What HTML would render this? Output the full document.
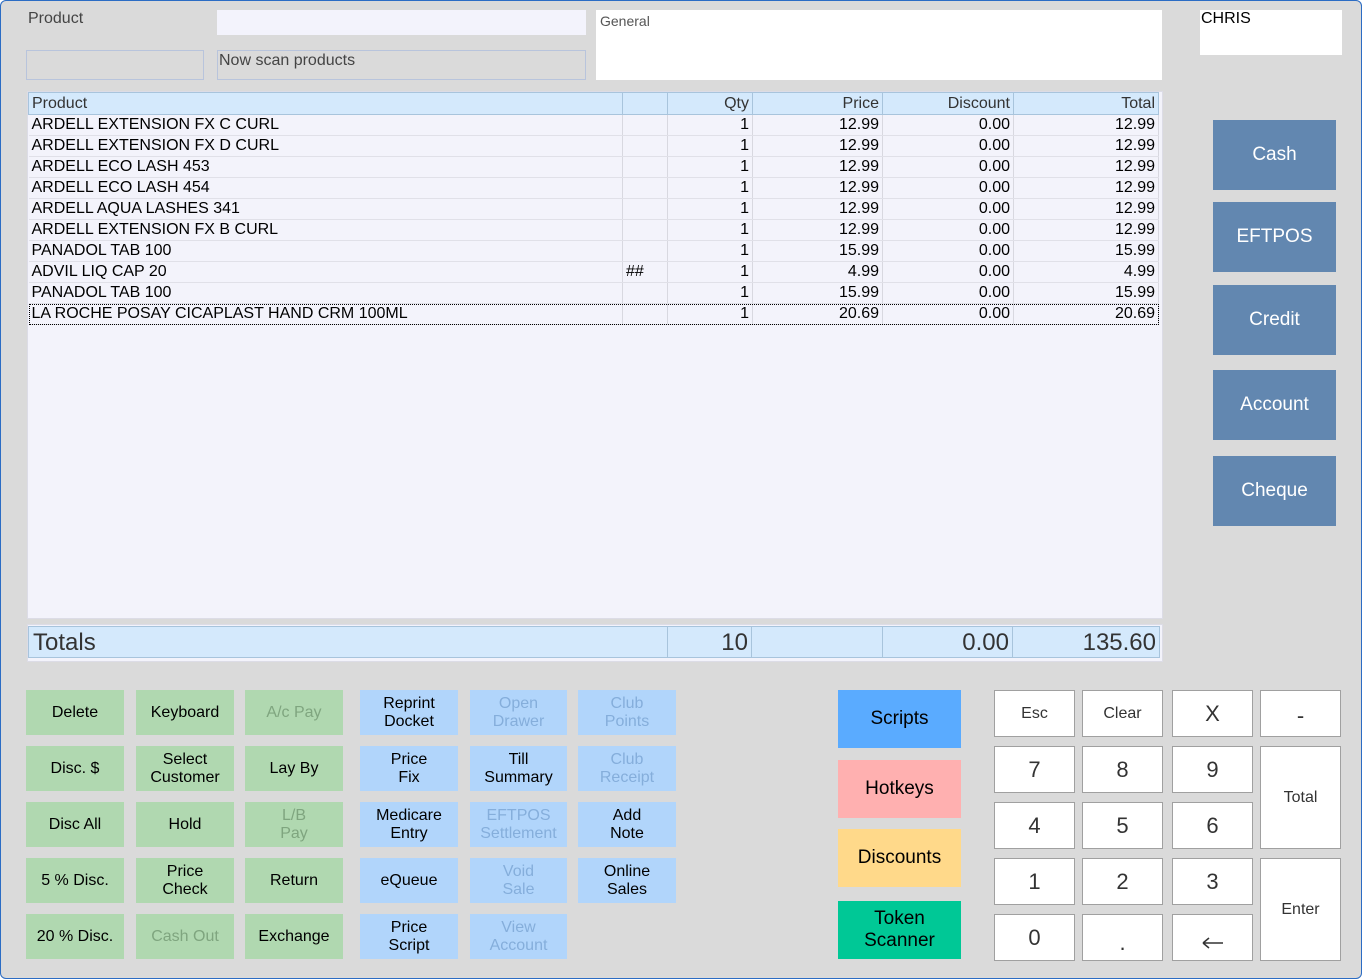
<!DOCTYPE html>
<html><head><meta charset="utf-8"><style>
*{box-sizing:border-box;margin:0;padding:0}
body{width:1362px;height:979px;overflow:hidden;background:#fff;font-family:"Liberation Sans",Arial,sans-serif;position:relative}
#win{position:absolute;left:0;top:0;width:1362px;height:979px;background:#dadada;box-shadow:inset 0 0 0 1px #2b6cc4;border-radius:6px}
.a{position:absolute}
.lbl{font-size:16px;color:#444}
table{border-collapse:collapse;font-size:16px;color:#000;table-layout:fixed}
td{height:21px;border-right:1px solid #d8d8e0;border-bottom:1px solid #e0e0e8;padding:0 3px;white-space:nowrap;overflow:hidden;line-height:20px}
td.r{text-align:right}
tr.h td{background:#d4e9fc;border:1px solid #a8c4dc;color:#333;height:22px}
.b{position:absolute;display:flex;align-items:center;justify-content:center;text-align:center;font-size:16px;line-height:18px;color:#000}
.g{background:#b0d8b0}.bl{background:#b1d5fb}
.dg{color:#7fa57f}.db{color:#85aedb}
.pay{background:#6287b0;color:#fff;font-size:19px;width:123px;height:70px;left:1213px}
.col{width:123px;left:838px;font-size:19px;line-height:22px}
.k{background:#fff;border:1px solid #a0a0a0;font-size:22px;color:#333}
</style></head><body><div id="win">
<div class="a lbl" style="left:28px;top:10px">Product</div>
<div class="a" style="left:217px;top:10px;width:369px;height:25px;background:#f3f3fc"></div>
<div class="a" style="left:26px;top:50px;width:178px;height:30px;border:1px solid #b8c4dc"></div>
<div class="a lbl" style="left:217px;top:50px;width:369px;height:30px;border:1px solid #b8c4dc;padding-left:1px;line-height:20px">Now scan products</div>
<div class="a" style="left:596px;top:10px;width:566px;height:70px;background:#fff;font-size:14px;color:#555;padding:3px 4px">General</div>
<div class="a" style="left:1200px;top:10px;width:142px;height:45px;background:#fff;font-size:16px;color:#000;padding:0 1px">CHRIS</div>

<div class="a" style="left:27px;top:91px;width:1136px;height:528px;background:#f3f3fb;border:1px solid #dcdce6">
<table style="width:1130px">
<colgroup><col style="width:594px"><col style="width:45px"><col style="width:85px"><col style="width:130px"><col style="width:131px"><col style="width:145px"></colgroup>
<tr class="h"><td>Product</td><td></td><td class="r">Qty</td><td class="r">Price</td><td class="r">Discount</td><td class="r">Total</td></tr>
<tr><td>ARDELL EXTENSION FX C CURL</td><td></td><td class="r">1</td><td class="r">12.99</td><td class="r">0.00</td><td class="r">12.99</td></tr>
<tr><td>ARDELL EXTENSION FX D CURL</td><td></td><td class="r">1</td><td class="r">12.99</td><td class="r">0.00</td><td class="r">12.99</td></tr>
<tr><td>ARDELL ECO LASH 453</td><td></td><td class="r">1</td><td class="r">12.99</td><td class="r">0.00</td><td class="r">12.99</td></tr>
<tr><td>ARDELL ECO LASH 454</td><td></td><td class="r">1</td><td class="r">12.99</td><td class="r">0.00</td><td class="r">12.99</td></tr>
<tr><td>ARDELL AQUA LASHES 341</td><td></td><td class="r">1</td><td class="r">12.99</td><td class="r">0.00</td><td class="r">12.99</td></tr>
<tr><td>ARDELL EXTENSION FX B CURL</td><td></td><td class="r">1</td><td class="r">12.99</td><td class="r">0.00</td><td class="r">12.99</td></tr>
<tr><td>PANADOL TAB 100</td><td></td><td class="r">1</td><td class="r">15.99</td><td class="r">0.00</td><td class="r">15.99</td></tr>
<tr><td>ADVIL LIQ CAP 20</td><td>##</td><td class="r">1</td><td class="r">4.99</td><td class="r">0.00</td><td class="r">4.99</td></tr>
<tr><td>PANADOL TAB 100</td><td></td><td class="r">1</td><td class="r">15.99</td><td class="r">0.00</td><td class="r">15.99</td></tr>
<tr style="outline:1px dotted #000;outline-offset:-1px"><td>LA ROCHE POSAY CICAPLAST HAND CRM 100ML</td><td></td><td class="r">1</td><td class="r">20.69</td><td class="r">0.00</td><td class="r">20.69</td></tr>
</table></div>

<div class="a" style="left:27px;top:624px;width:1136px;height:38px;background:#f3f3fb;border:1px solid #dcdce6">
<div class="a" style="left:0;top:1px;width:1132px;height:32px;background:#d4e9fc;border:1px solid #a8c4dc;font-size:24px;color:#333">
<div class="a" style="left:4px;top:2px">Totals</div>
<div class="a" style="left:638px;top:0;width:85px;height:30px;border-left:1px solid #a8c4dc;border-right:1px solid #a8c4dc;text-align:right;padding:2px 3px">10</div>
<div class="a" style="left:853px;top:0;width:131px;height:30px;border-left:1px solid #a8c4dc;border-right:1px solid #a8c4dc;text-align:right;padding:2px 3px">0.00</div>
<div class="a" style="left:984px;top:0;width:146px;height:30px;text-align:right;padding:2px 3px">135.60</div>
</div></div>

<div class="b pay" style="top:120px">Cash</div>
<div class="b pay" style="top:202px">EFTPOS</div>
<div class="b pay" style="top:285px">Credit</div>
<div class="b pay" style="top:370px">Account</div>
<div class="b pay" style="top:456px">Cheque</div>

<div class="b g" style="left:26px;top:690px;width:98px;height:45px">Delete</div>
<div class="b g" style="left:136px;top:690px;width:98px;height:45px">Keyboard</div>
<div class="b g dg" style="left:245px;top:690px;width:98px;height:45px">A/c Pay</div>
<div class="b bl" style="left:360px;top:690px;width:98px;height:45px">Reprint<br>Docket</div>
<div class="b bl db" style="left:470px;top:690px;width:97px;height:45px">Open<br>Drawer</div>
<div class="b bl db" style="left:578px;top:690px;width:98px;height:45px">Club<br>Points</div>

<div class="b g" style="left:26px;top:746px;width:98px;height:45px">Disc. $</div>
<div class="b g" style="left:136px;top:746px;width:98px;height:45px">Select<br>Customer</div>
<div class="b g" style="left:245px;top:746px;width:98px;height:45px">Lay By</div>
<div class="b bl" style="left:360px;top:746px;width:98px;height:45px">Price<br>Fix</div>
<div class="b bl" style="left:470px;top:746px;width:97px;height:45px">Till<br>Summary</div>
<div class="b bl db" style="left:578px;top:746px;width:98px;height:45px">Club<br>Receipt</div>

<div class="b g" style="left:26px;top:802px;width:98px;height:45px">Disc All</div>
<div class="b g" style="left:136px;top:802px;width:98px;height:45px">Hold</div>
<div class="b g dg" style="left:245px;top:802px;width:98px;height:45px">L/B<br>Pay</div>
<div class="b bl" style="left:360px;top:802px;width:98px;height:45px">Medicare<br>Entry</div>
<div class="b bl db" style="left:470px;top:802px;width:97px;height:45px">EFTPOS<br>Settlement</div>
<div class="b bl" style="left:578px;top:802px;width:98px;height:45px">Add<br>Note</div>

<div class="b g" style="left:26px;top:858px;width:98px;height:45px">5 % Disc.</div>
<div class="b g" style="left:136px;top:858px;width:98px;height:45px">Price<br>Check</div>
<div class="b g" style="left:245px;top:858px;width:98px;height:45px">Return</div>
<div class="b bl" style="left:360px;top:858px;width:98px;height:45px">eQueue</div>
<div class="b bl db" style="left:470px;top:858px;width:97px;height:45px">Void<br>Sale</div>
<div class="b bl" style="left:578px;top:858px;width:98px;height:45px">Online<br>Sales</div>

<div class="b g" style="left:26px;top:914px;width:98px;height:45px">20 % Disc.</div>
<div class="b g dg" style="left:136px;top:914px;width:98px;height:45px">Cash Out</div>
<div class="b g" style="left:245px;top:914px;width:98px;height:45px">Exchange</div>
<div class="b bl" style="left:360px;top:914px;width:98px;height:45px">Price<br>Script</div>
<div class="b bl db" style="left:470px;top:914px;width:97px;height:45px">View<br>Account</div>

<div class="b col" style="top:690px;height:58px;background:#5aabff">Scripts</div>
<div class="b col" style="top:760px;height:58px;background:#ffb0b0">Hotkeys</div>
<div class="b col" style="top:829px;height:58px;background:#ffd98a">Discounts</div>
<div class="b col" style="top:901px;height:58px;background:#00c896">Token<br>Scanner</div>

<div class="b k" style="left:994px;top:690px;width:81px;height:47px;font-size:16px">Esc</div>
<div class="b k" style="left:1082px;top:690px;width:81px;height:47px;font-size:16px">Clear</div>
<div class="b k" style="left:1172px;top:690px;width:81px;height:47px">X</div>
<div class="b k" style="left:1260px;top:690px;width:81px;height:47px;padding-top:4px">-</div>
<div class="b k" style="left:994px;top:746px;width:81px;height:47px">7</div>
<div class="b k" style="left:1082px;top:746px;width:81px;height:47px">8</div>
<div class="b k" style="left:1172px;top:746px;width:81px;height:47px">9</div>
<div class="b k" style="left:1260px;top:746px;width:81px;height:103px;font-size:16px">Total</div>
<div class="b k" style="left:994px;top:802px;width:81px;height:47px">4</div>
<div class="b k" style="left:1082px;top:802px;width:81px;height:47px">5</div>
<div class="b k" style="left:1172px;top:802px;width:81px;height:47px">6</div>
<div class="b k" style="left:994px;top:858px;width:81px;height:47px">1</div>
<div class="b k" style="left:1082px;top:858px;width:81px;height:47px">2</div>
<div class="b k" style="left:1172px;top:858px;width:81px;height:47px">3</div>
<div class="b k" style="left:1260px;top:858px;width:81px;height:103px;font-size:16px">Enter</div>
<div class="b k" style="left:994px;top:914px;width:81px;height:47px">0</div>
<div class="b k" style="left:1082px;top:914px;width:81px;height:47px;padding-top:10px">.</div>
<div class="b k" style="left:1172px;top:914px;width:81px;height:47px"><svg width="22" height="12" viewBox="0 0 22 12" style="margin-top:10px"><path d="M1 6H21M1 6L7 1M1 6L7 11" stroke="#333" stroke-width="1.5" fill="none"/></svg></div>
</div></body></html>
